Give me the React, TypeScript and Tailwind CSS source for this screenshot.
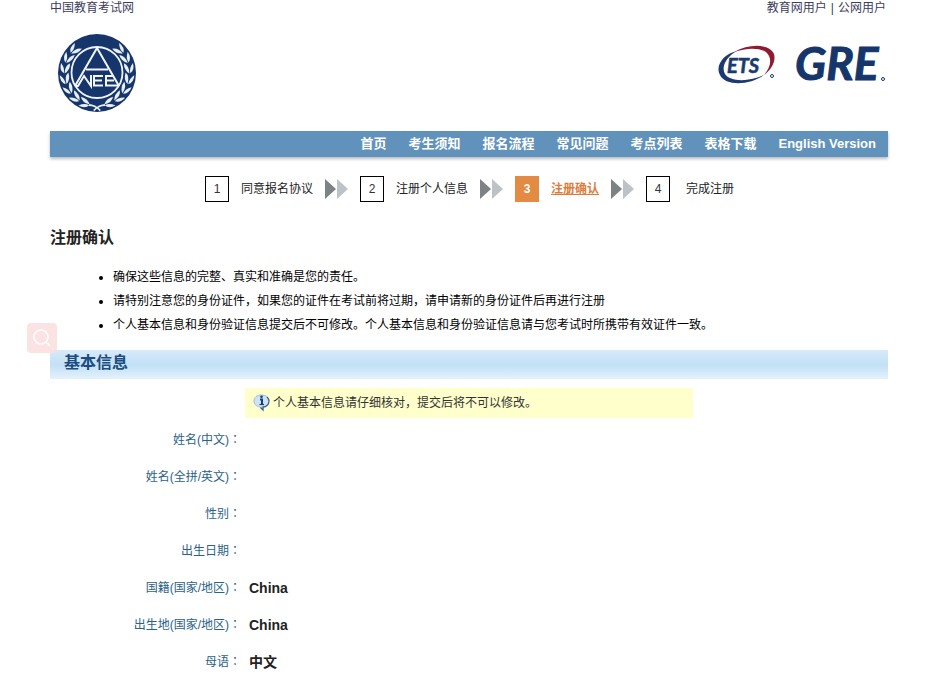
import React from "react";

const navItems = ["首页", "考生须知", "报名流程", "常见问题", "考点列表", "表格下载", "English Version"];

const steps = [
  { n: 1, label: "同意报名协议" },
  { n: 2, label: "注册个人信息" },
  { n: 3, label: "注册确认", active: true },
  { n: 4, label: "完成注册" },
];

const notes = [
  "确保这些信息的完整、真实和准确是您的责任。",
  "请特别注意您的身份证件，如果您的证件在考试前将过期，请申请新的身份证件后再进行注册",
  "个人基本信息和身份验证信息提交后不可修改。个人基本信息和身份验证信息请与您考试时所携带有效证件一致。",
];

const fields = [
  { label: "姓名(中文)", value: "" },
  { label: "姓名(全拼/英文)", value: "" },
  { label: "性别", value: "" },
  { label: "出生日期", value: "" },
  { label: "国籍(国家/地区)", value: "China" },
  { label: "出生地(国家/地区)", value: "China" },
  { label: "母语", value: "中文" },
];

const leafAngles = [22, 41, 60, 79, 98, 117, 136];

function Laurel() {
  return (
    <g fill="#e8eef6">
      {leafAngles.map((a) => (
        <g key={a} transform={`rotate(${a} 40 40)`}>
          <path d="M45 72Q41 67 34 68Q37 73 45 72z" />
          <path d="M45 73Q40 72 35 77Q42 78 45 73z" />
        </g>
      ))}
      <path d="M32 71Q38 71 44 77L42.500 78Q38 73 32 73z" />
    </g>
  );
}

function Seal() {
  return (
    <svg viewBox="0 0 80 80" className="h-20 w-20" role="img" aria-label="NEEA">
      <circle cx="40" cy="40" r="39" fill="#15356b" />
      <Laurel />
      <g transform="matrix(-1 0 0 1 80 0)">
        <Laurel />
      </g>
      <circle cx="40" cy="39.500" r="25.500" fill="#15356b" stroke="#eef3fa" strokeWidth="1.800" />
      <g fill="none" stroke="#f2f6fb" strokeWidth="2">
        <path d="M18 53L40 15L62 53M29 36.500H51" />
        <path d="M18 53H21L27 43L34 53V42M46 43H37V52.500H46M37 47.500H45M57 43H49V52.500H61M49 47.500H57" />
      </g>
    </svg>
  );
}

function EtsLogo() {
  return (
    <svg viewBox="0 0 60 42" className="h-[42px] w-[60px]" role="img" aria-label="ETS">
      <path d="M19 7C5 10-3 22 2 31C7 42 31 42 46 31C31 38 12 38 7 30C3 23 8 13 19 7z" fill="#1b3b70" />
      <path d="M16 8C32-1 52 0 56 10C58 17 54 25 46 31C51 25 54 18 51 12C47 3 30 3 16 8z" fill="#8e1b32" />
      <text x="9" y="29" fontSize="20" fontWeight="700" fontStyle="italic" fill="#1b3b70" stroke="#1b3b70" strokeWidth="0.600" className="font-['Lato',sans-serif]">ETS</text>
      <circle cx="54" cy="32" r="1.500" fill="none" stroke="#1b3b70" strokeWidth="1" />
    </svg>
  );
}

function GreLogo() {
  return (
    <svg viewBox="0 0 92 64" className="h-16 w-[92px]" role="img" aria-label="GRE">
      <text x="-1" y="47" fontSize="46" fontWeight="700" fontStyle="italic" fill="#15356b" stroke="#15356b" strokeWidth="1" className="font-['Lato',sans-serif]">GRE</text>
      <circle cx="87" cy="46" r="1.500" fill="none" stroke="#15356b" strokeWidth="1" />
    </svg>
  );
}

function Arrows() {
  return (
    <svg viewBox="0 0 24 20" className="h-5 w-6" aria-hidden="true">
      <path d="M0 0L11 10L0 20z" fill="#7d8285" />
      <path d="M12 0L23 10L12 20z" fill="#bcc2c6" />
    </svg>
  );
}

function InfoIcon() {
  return (
    <svg viewBox="0 0 18 18" className="h-[18px] w-[18px]" aria-hidden="true">
      <path d="M8 1C4 1 1 3.500 1 7C1 10 3.500 12.500 7 13L10 16V13C14 12.500 16 10 16 7C16 3.500 13 1 8 1z" fill="#cfe3f7" stroke="#9fb9d6" />
      <path d="M14 3C16.500 5.500 16.500 9 14 11.500C13 12.500 11.500 13 10 13V16L7.500 13.500" fill="none" stroke="#41658f" strokeWidth="1.300" />
      <path d="M7 5.500H9V10.500" fill="none" stroke="#123f80" strokeWidth="2" />
      <path d="M6.500 10.500H11" stroke="#123f80" strokeWidth="1.200" />
      <circle cx="8.500" cy="2.800" r="1.300" fill="#123f80" />
    </svg>
  );
}

export default function App() {
  return (
    <div className="relative bg-white pr-[58px] pl-[50px] font-['Liberation_Sans','Noto_Sans_CJK_SC',sans-serif] text-xs text-[#222]">
      <div className="flex h-4 items-center justify-between text-[#3c3c5c]">
        <a href="#home">中国教育考试网</a>
        <div className="flex gap-1 pr-0.5">
          <a href="#edu">教育网用户</a>
          <span>|</span>
          <a href="#public">公网用户</a>
        </div>
      </div>

      <header className="flex h-[115px] items-start justify-between pt-[17px] pl-[7px]">
        <Seal />
        <div className="flex items-center gap-[18px]">
          <EtsLogo />
          <GreLogo />
        </div>
      </header>

      <nav className="flex h-[26px] items-center justify-end gap-[22px] bg-[#6192bb] pr-3 text-[13px] font-bold text-white shadow-[0_2px_3px_#b8bcc0]">
        {navItems.map((t) => (
          <a key={t} href="#nav">{t}</a>
        ))}
      </nav>

      <ol className="flex h-16 items-center pl-[155px]">
        {steps.map((s, i) => (
          <li key={s.n} className="flex items-center">
            <span
              className={
                s.active
                  ? "flex h-[26px] w-6 items-center justify-center bg-[#e38b43] font-bold text-white"
                  : "flex h-[26px] w-6 items-center justify-center border border-black text-[#333]"
              }
            >
              {s.n}
            </span>
            <span className={s.active ? "ml-3 font-bold text-[#dc7d3c] underline" : i === 3 ? "ml-4" : "ml-3"}>{s.label}</span>
            {i < 3 && (
              <span className="mr-[11px] ml-3">
                <Arrows />
              </span>
            )}
          </li>
        ))}
      </ol>

      <h1 className="text-base leading-[34px] font-bold">注册确认</h1>

      <ul className="mt-2.5 list-disc pl-[63px] leading-6 text-black">
        {notes.map((t) => (
          <li key={t}>{t}</li>
        ))}
      </ul>

      <h2 className="mt-[13px] h-[29px] bg-linear-to-b from-[#d8eafa] via-[#c3e0f6] to-[#e3f1fc] pl-3.5 text-base leading-[26px] font-bold text-[#1b4d82]">
        基本信息
      </h2>

      <section className="mt-[9px]">
        <p className="ml-[195px] flex h-[30px] w-[448px] items-center gap-0.5 bg-[#ffffcc] pl-2 text-[#333]">
          <InfoIcon />
          个人基本信息请仔细核对，提交后将不可以修改。
        </p>
        <dl className="mt-[3px]">
          {fields.map((f) => (
            <div key={f.label} className="flex h-[37px] items-center gap-2">
              <dt className="w-[191px] text-right text-[#2b6289]">
                {f.label}
                <span className="font-['Noto_Sans_CJK_TC',sans-serif]" lang="zh-TW">：</span>
              </dt>
              <dd className="text-sm font-bold">{f.value}</dd>
            </div>
          ))}
        </dl>
      </section>

      <button
        type="button"
        aria-label="搜索"
        className="absolute top-[323px] left-[27px] flex h-[30px] w-[30px] items-center justify-center rounded-sm bg-[#fbdfe0]/90"
      >
        <svg viewBox="0 0 20 20" className="h-5 w-5" fill="none" stroke="#fff" strokeWidth="1.500">
          <circle cx="9" cy="9" r="7" />
          <path d="M14 14L18 18" />
        </svg>
      </button>
    </div>
  );
}
